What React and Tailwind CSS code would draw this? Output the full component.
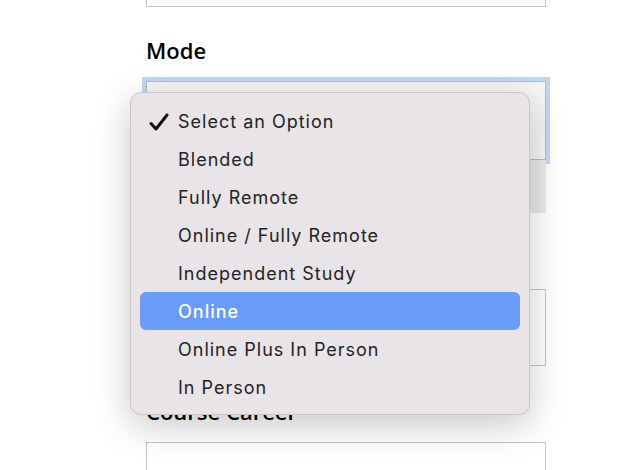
import React from 'react'

const options = [
  'Select an Option',
  'Blended',
  'Fully Remote',
  'Online / Fully Remote',
  'Independent Study',
  'Online',
  'Online Plus In Person',
  'In Person',
]

function Check() {
  return (
    <svg width="20" height="18" viewBox="0 0 20 18" className="absolute left-[9px] top-[11px]">
      <path d="M2 10.5 L7 16 L18 2" fill="none" stroke="#111" strokeWidth="3" strokeLinecap="round" strokeLinejoin="round" />
    </svg>
  )
}

export default function App() {
  const [selected] = React.useState(0)
  const hovered = 5

  return (
    <div className="relative w-[628px] h-[470px] overflow-hidden bg-white" style={{ fontFamily: '"Open Sans", sans-serif' }}>
      <div className="ml-[146px] w-[400px] flex flex-col">
        <div className="h-[7px] border-x border-b border-[#c4c4c4]" />

        <label className="mt-[28px] mb-[16px] h-[30px] leading-[30px] text-[22px] font-semibold text-black">Mode</label>
        <div className="h-[79px] border border-[#b9b9b9] bg-[#f5f5f5] outline-4 outline-[#c2d7f4]" />
        <div className="h-[53px] bg-[#e9e9e9]" />

        <div className="mt-[76px] h-[77px] border border-[#c4c4c4]" />

        <label className="mt-[30px] mb-[16px] h-[30px] leading-[30px] text-[22px] font-semibold text-black">Course Career</label>
        <div className="h-[77px] border border-[#c4c4c4]" />
      </div>

      <div
        className="absolute left-[130px] top-[92px] w-[400px] h-[323px] rounded-[11px] border border-[#c9c5c8] bg-[#e9e4e7] pt-[9px] shadow-[0_10px_36px_rgba(0,0,0,0.22)]"
        style={{ fontFamily: 'Inter, "Noto Sans", sans-serif' }}
      >
        {options.map((o, i) => (
          <div
            key={o}
            className={
              'relative mx-[9px] h-[38px] rounded-[6px] pl-[38px] pt-px leading-[38px] text-[18px] tracking-[1px] ' +
              (i === hovered ? 'bg-[#689cf8] text-white font-medium' : 'text-[#232323]')
            }
          >
            {i === selected && <Check />}
            {o}
          </div>
        ))}
      </div>
    </div>
  )
}
